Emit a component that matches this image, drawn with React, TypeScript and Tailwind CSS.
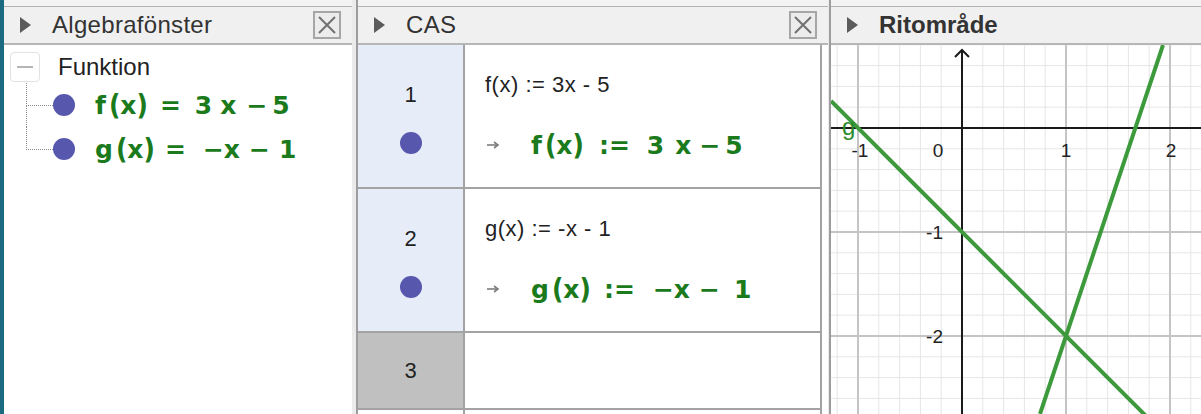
import React from 'react';

const W = 370;
const H = 369;
const OX = 131;
const OY = 83;
const U = 104;

function Triangle() {
  return <div className="w-0 h-0 border-y-[8px] border-y-transparent border-l-[11px] border-l-[#5b5b5b]" />;
}

function CloseBox() {
  return (
    <div className="w-[28px] h-[28px] border-2 border-[#a6a6a6] bg-[#ececec] flex items-center justify-center">
      <svg width="20" height="20" viewBox="0 0 20 20">
        <path d="M2 2 L18 18 M18 2 L2 18" stroke="#707070" strokeWidth="2" />
      </svg>
    </div>
  );
}

function PanelHeader({ title, bold, close }: { title: string; bold?: boolean; close?: boolean }) {
  return (
    <div className="flex flex-col shrink-0">
      <div className="h-[7px] bg-[#f3f3f3] border-b border-[#b3b3b3]" />
      <div className="h-[38px] bg-[#f0f0f0] border-b-2 border-[#b6b6b6] flex items-center pl-[16px] pr-[11px]">
        <Triangle />
        <span className={`ml-[21px] text-[24px] leading-none text-[#333] ${bold ? 'font-bold' : 'tracking-[0.3px]'}`}>{title}</span>
        {close && (
          <div className="ml-auto">
            <CloseBox />
          </div>
        )}
      </div>
    </div>
  );
}

function Dot() {
  return <div className="w-[22px] h-[22px] rounded-full bg-[#5757ad] shrink-0" />;
}

const mathCls = "flex items-center whitespace-pre font-['DejaVu_Sans',sans-serif] font-bold text-[25px] leading-none text-[#1b7a1b]";

function FX({ name }: { name: string }) {
  return (
    <span className="flex items-center">
      <span>{name}</span>
      <span className="ml-[3px] scale-y-[1.15]">(</span>
      <span>x</span>
      <span className="scale-y-[1.15]">)</span>
    </span>
  );
}

function AlgebraItem({ last, children }: { last?: boolean; children: React.ReactNode }) {
  return (
    <div className="flex items-center h-[44px]">
      <div className="w-[27px] self-stretch flex flex-col">
        <div className="flex-1 border-l border-b border-dotted border-[#8a8a8a]" />
        <div className={`flex-1 ${last ? '' : 'border-l border-dotted border-[#8a8a8a]'}`} />
      </div>
      <Dot />
      <div className="ml-[20px]">{children}</div>
    </div>
  );
}

function AlgebraPanel() {
  return (
    <div className="w-[348px] flex flex-col bg-white">
      <PanelHeader title="Algebrafönster" close />
      <div className="pl-[6px] pt-[7px]">
        <div className="flex items-center h-[30px]">
          <div className="w-[30px] h-[30px] border border-[#e2e2e2] rounded-[4px] flex items-center justify-center">
            <div className="w-[16px] h-[2px] bg-[#b5b5b5]" />
          </div>
          <span className="ml-[18px] text-[24px] leading-none text-[#222]">Funktion</span>
        </div>
        <div className="ml-[16px] mt-[1px]">
          <AlgebraItem>
            <div className={mathCls}>
              <FX name="f" />
              <span className="ml-[12px]">=</span>
              <span className="ml-[14px]">3</span>
              <span className="ml-[8px]">x</span>
              <span className="ml-[10px]">−</span>
              <span className="ml-[5px]">5</span>
            </div>
          </AlgebraItem>
          <AlgebraItem last>
            <div className={mathCls}>
              <FX name="g" />
              <span className="ml-[10px]">=</span>
              <span className="ml-[17px]">−x</span>
              <span className="ml-[9px]">−</span>
              <span className="ml-[9px]">1</span>
            </div>
          </AlgebraItem>
        </div>
      </div>
    </div>
  );
}

function Arrow() {
  return (
    <svg width="14" height="10" viewBox="0 0 14 10" className="ml-[1px] mr-[31px]">
      <path d="M1 5 H11" stroke="#7d7d7d" strokeWidth="1.6" />
      <path d="M8 2 L12 5 L8 8" fill="none" stroke="#7d7d7d" strokeWidth="1.6" />
    </svg>
  );
}

function CasRow({ n, input, children }: { n: number; input: string; children: React.ReactNode }) {
  return (
    <div className="flex h-[144px] border-b-2 border-[#a3a3a3]">
      <div className="w-[107px] border-r-2 border-[#a3a3a3] bg-[#e6edf8] flex flex-col items-center pt-[38px]">
        <span className="text-[22px] leading-[24px] text-[#222]">{n}</span>
        <div className="mt-[25px]">
          <Dot />
        </div>
      </div>
      <div className="flex-1 flex flex-col pl-[20px] pt-[28px]">
        <span className="text-[22px] leading-[24px] text-[#222] tracking-[0.5px]">{input}</span>
        <div className="flex items-center mt-[32px] h-[32px]">
          <Arrow />
          {children}
        </div>
      </div>
    </div>
  );
}

function CasPanel() {
  return (
    <div className="w-[470px] flex flex-col bg-white">
      <PanelHeader title="CAS" close />
      <div className="flex-1 flex">
        <div className="w-[464px] flex flex-col border-r-2 border-[#a3a3a3]">
          <CasRow n={1} input="f(x) := 3x - 5">
            <div className={mathCls}>
              <FX name="f" />
              <span className="ml-[15px]">:=</span>
              <span className="ml-[17px]">3</span>
              <span className="ml-[11px]">x</span>
              <span className="ml-[8px]">−</span>
              <span className="ml-[5px]">5</span>
            </div>
          </CasRow>
          <CasRow n={2} input="g(x) := -x - 1">
            <div className={mathCls}>
              <FX name="g" />
              <span className="ml-[13px]">:=</span>
              <span className="ml-[18px]">−x</span>
              <span className="ml-[9px]">−</span>
              <span className="ml-[14px]">1</span>
            </div>
          </CasRow>
          <div className="flex h-[77px] border-b-2 border-[#a3a3a3]">
            <div className="w-[107px] border-r-2 border-[#a3a3a3] bg-[#c0c0c0] flex items-center justify-center">
              <span className="text-[22px] leading-[24px] text-[#222]">3</span>
            </div>
            <div className="flex-1" />
          </div>
          <div className="flex flex-1">
            <div className="w-[107px] border-r-2 border-[#a3a3a3]" />
            <div className="flex-1" />
          </div>
        </div>
      </div>
    </div>
  );
}

function Graph() {
  const minor = U / 5;
  const vk: number[] = [];
  for (let k = -7; k <= 12; k++) vk.push(k);
  const hk: number[] = [];
  for (let k = -4; k <= 14; k++) hk.push(k);
  const fx = (y: number) => (y + 5) / 3;
  const gy = (x: number) => -x - 1;
  const toPx = (x: number) => OX + x * U;
  const toPy = (y: number) => OY - y * U;
  const f1 = fx(OY / U);
  const f2 = fx(-(H - OY) / U);
  const gx1 = -OX / U;
  const gx2 = (W - OX) / U;
  return (
    <svg width={W} height={H} viewBox={`0 0 ${W} ${H}`} className="block">
      {vk.filter(k => k % 5 !== 0).map(k => (
        <line key={'vm' + k} x1={OX + k * minor} x2={OX + k * minor} y1={0} y2={H} stroke="#e6e6e6" strokeWidth={1} />
      ))}
      {hk.filter(k => k % 5 !== 0).map(k => (
        <line key={'hm' + k} y1={OY + k * minor} y2={OY + k * minor} x1={0} x2={W} stroke="#e6e6e6" strokeWidth={1} />
      ))}
      {vk.filter(k => k % 5 === 0 && k !== 0).map(k => (
        <line key={'vM' + k} x1={OX + k * minor} x2={OX + k * minor} y1={0} y2={H} stroke="#c4c4c4" strokeWidth={2} />
      ))}
      {hk.filter(k => k % 5 === 0 && k !== 0).map(k => (
        <line key={'hM' + k} y1={OY + k * minor} y2={OY + k * minor} x1={0} x2={W} stroke="#c4c4c4" strokeWidth={2} />
      ))}
      <line x1={0} x2={W} y1={OY} y2={OY} stroke="#1a1a1a" strokeWidth={2} />
      <line x1={OX} x2={OX} y1={5} y2={H} stroke="#1a1a1a" strokeWidth={2} />
      <polyline points={`${OX - 7},12 ${OX},5 ${OX + 7},12`} fill="none" stroke="#1a1a1a" strokeWidth={2} />
      <g fontFamily="'Liberation Sans', Arial, sans-serif" fontSize={19} fill="#222">
        <text x={29} y={112} textAnchor="middle">-1</text>
        <text x={107} y={112} textAnchor="middle">0</text>
        <text x={toPx(1)} y={112} textAnchor="middle">1</text>
        <text x={toPx(2) + 1} y={112} textAnchor="middle">2</text>
        <text x={112} y={194} textAnchor="end">-1</text>
        <text x={112} y={298} textAnchor="end">-2</text>
      </g>
      <line x1={toPx(f1)} y1={0} x2={toPx(f2)} y2={H} stroke="#3c993c" strokeWidth={4} />
      <line x1={toPx(gx1)} y1={toPy(gy(gx1))} x2={toPx(gx2)} y2={toPy(gy(gx2))} stroke="#3c993c" strokeWidth={4} />
      <text x={11} y={90} fontFamily="'Liberation Sans', Arial, sans-serif" fontSize={24} fill="#2b8a2b">g</text>
    </svg>
  );
}

function GraphicsPanel() {
  return (
    <div className="flex-1 flex flex-col bg-white">
      <PanelHeader title="Ritområde" bold />
      <div className="flex-1 overflow-hidden">
        <Graph />
      </div>
    </div>
  );
}

export default function App() {
  return (
    <div className="w-[1201px] h-[414px] flex overflow-hidden bg-[#ececec] font-['Liberation_Sans',Arial,sans-serif]">
      <div className="w-[4px] bg-[#1c6a80]" />
      <AlgebraPanel />
      <div className="w-[6px] bg-[#ebebeb] border-r-2 border-[#9d9d9d]" />
      <CasPanel />
      <div className="w-[3px] bg-[#ebebeb] border-r-2 border-[#9d9d9d]" />
      <GraphicsPanel />
    </div>
  );
}
